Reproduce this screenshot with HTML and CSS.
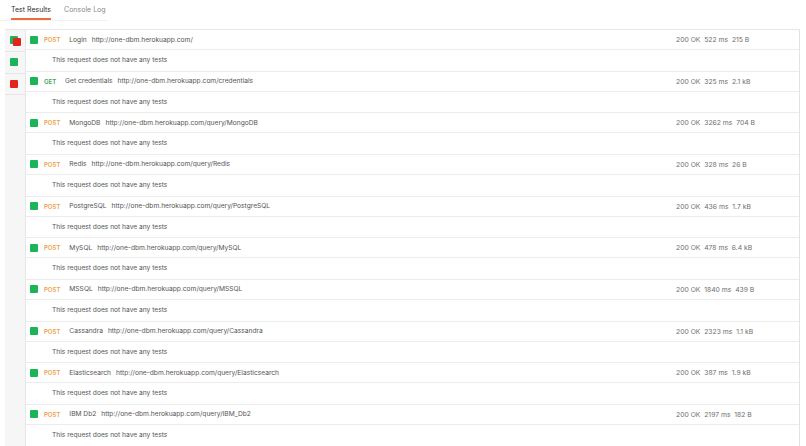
FILE: index.html
```html
<!DOCTYPE html>
<html lang="en">
<head>
    <meta charset="UTF-8">
    <meta name="viewport" content="width=device-width, initial-scale=1.0">
    <title>Test Results</title>
    <link rel="stylesheet" href="styles.css">
</head>
<body>
    <!-- tabs -->
    <nav class="tabs">
        <span class="tab active">Test Results</span>
        <span class="tab">Console Log</span>
    </nav>

    <div class="results">
        <!-- status column -->
        <div class="sidebar">
            <div class="cell"><span class="sq green stack"></span><span class="sq red stack2"></span></div>
            <div class="cell"><span class="sq green"></span></div>
            <div class="cell"><span class="sq red"></span></div>
        </div>

        <!-- requests -->
        <div class="list">
            <div class="req">
                <div class="main"><span class="sq green"></span><span class="method post">POST</span><span class="name">Login</span><span class="url">http://one-dbm.herokuapp.com/</span></div>
                <div class="stats">200 OK&nbsp;&nbsp;522 ms&nbsp;&nbsp;215 B</div>
            </div>
            <div class="detail">This request does not have any tests</div>

            <div class="req">
                <div class="main"><span class="sq green"></span><span class="method get">GET</span><span class="name">Get credentials</span><span class="url">http://one-dbm.herokuapp.com/credentials</span></div>
                <div class="stats">200 OK&nbsp;&nbsp;325 ms&nbsp;&nbsp;2.1 kB</div>
            </div>
            <div class="detail">This request does not have any tests</div>

            <div class="req">
                <div class="main"><span class="sq green"></span><span class="method post">POST</span><span class="name">MongoDB</span><span class="url">http://one-dbm.herokuapp.com/query/MongoDB</span></div>
                <div class="stats">200 OK&nbsp;&nbsp;3262 ms&nbsp;&nbsp;704 B</div>
            </div>
            <div class="detail">This request does not have any tests</div>

            <div class="req">
                <div class="main"><span class="sq green"></span><span class="method post">POST</span><span class="name">Redis</span><span class="url">http://one-dbm.herokuapp.com/query/Redis</span></div>
                <div class="stats">200 OK&nbsp;&nbsp;328 ms&nbsp;&nbsp;26 B</div>
            </div>
            <div class="detail">This request does not have any tests</div>

            <div class="req">
                <div class="main"><span class="sq green"></span><span class="method post">POST</span><span class="name">PostgreSQL</span><span class="url">http://one-dbm.herokuapp.com/query/PostgreSQL</span></div>
                <div class="stats">200 OK&nbsp;&nbsp;436 ms&nbsp;&nbsp;1.7 kB</div>
            </div>
            <div class="detail">This request does not have any tests</div>

            <div class="req">
                <div class="main"><span class="sq green"></span><span class="method post">POST</span><span class="name">MySQL</span><span class="url">http://one-dbm.herokuapp.com/query/MySQL</span></div>
                <div class="stats">200 OK&nbsp;&nbsp;478 ms&nbsp;&nbsp;6.4 kB</div>
            </div>
            <div class="detail">This request does not have any tests</div>

            <div class="req">
                <div class="main"><span class="sq green"></span><span class="method post">POST</span><span class="name">MSSQL</span><span class="url">http://one-dbm.herokuapp.com/query/MSSQL</span></div>
                <div class="stats">200 OK&nbsp;&nbsp;1840 ms&nbsp;&nbsp;439 B</div>
            </div>
            <div class="detail">This request does not have any tests</div>

            <div class="req">
                <div class="main"><span class="sq green"></span><span class="method post">POST</span><span class="name">Cassandra</span><span class="url">http://one-dbm.herokuapp.com/query/Cassandra</span></div>
                <div class="stats">200 OK&nbsp;&nbsp;2323 ms&nbsp;&nbsp;1.1 kB</div>
            </div>
            <div class="detail">This request does not have any tests</div>

            <div class="req">
                <div class="main"><span class="sq green"></span><span class="method post">POST</span><span class="name">Elasticsearch</span><span class="url">http://one-dbm.herokuapp.com/query/Elasticsearch</span></div>
                <div class="stats">200 OK&nbsp;&nbsp;387 ms&nbsp;&nbsp;1.9 kB</div>
            </div>
            <div class="detail">This request does not have any tests</div>

            <div class="req">
                <div class="main"><span class="sq green"></span><span class="method post">POST</span><span class="name">IBM Db2</span><span class="url">http://one-dbm.herokuapp.com/query/IBM_Db2</span></div>
                <div class="stats">200 OK&nbsp;&nbsp;2197 ms&nbsp;&nbsp;182 B</div>
            </div>
            <div class="detail">This request does not have any tests</div>
        </div>
    </div>
</body>
</html>
```

FILE: styles.css
```css
body {
    margin: 0;
    background: #ffffff;
    font-family: Inter, "Noto Sans", sans-serif;
    font-size: 6.65px;
    color: #555555;
    overflow: hidden;
}

.tabs {
    display: flex;
    gap: 13px;
    padding-left: 11px;
    height: 20px;
    width: 96px;
    border-bottom: 1px solid #f2f2f2;
    font-size: 7px;
}

.tab {
    line-height: 19px;
    color: #8a8a8a;
}

.tab.active {
    color: #303030;
    border-bottom: 2px solid #f26b3a;
    height: 18px;
}

.results {
    display: flex;
    margin-top: 8px;
    margin-left: 5px;
    width: 795px;
    height: 417px;
    overflow: hidden;
}

.sidebar {
    width: 20px;
    background: #f6f6f6;
    border-top: 1px solid #e6e6e6;
    border-right: 1px solid #e6e6e6;
}

.cell {
    position: relative;
    height: 20.8px;
    border-bottom: 1px solid #e6e6e6;
    display: flex;
    align-items: center;
    padding-left: 5px;
}

.sq {
    display: inline-block;
    width: 8px;
    height: 8px;
    border-radius: 1px;
    flex-shrink: 0;
}

.green {
    background: #1cb458;
}

.red {
    background: #e5231d;
}

.sidebar .stack2 {
    position: absolute;
    left: 8px;
    top: 8px;
}

.list {
    flex: 1;
    border-top: 1px solid #e6e6e6;
    border-right: 1px solid #e2e2e2;
}

.req {
    display: grid;
    grid-template-columns: 1fr 123px;
    align-items: center;
    height: 20px;
    border-bottom: 1px solid #ececec;
    box-sizing: border-box;
}

.main {
    display: flex;
    align-items: center;
    padding-left: 4px;
    white-space: nowrap;
}

.main .sq {
    margin-right: 6px;
}

.method {
    font-size: 6px;
    font-weight: 600;
    margin-right: 9px;
}

.post {
    color: #eba24b;
}

.get {
    color: #3aa55a;
}

.name {
    margin-right: 5px;
}

.stats {
    color: #6e6e6e;
    font-size: 6.8px;
    white-space: nowrap;
}

.detail {
    height: 21.67px;
    line-height: 20.67px;
    box-sizing: border-box;
    border-bottom: 1px solid #ececec;
    padding-left: 26px;
}
```
